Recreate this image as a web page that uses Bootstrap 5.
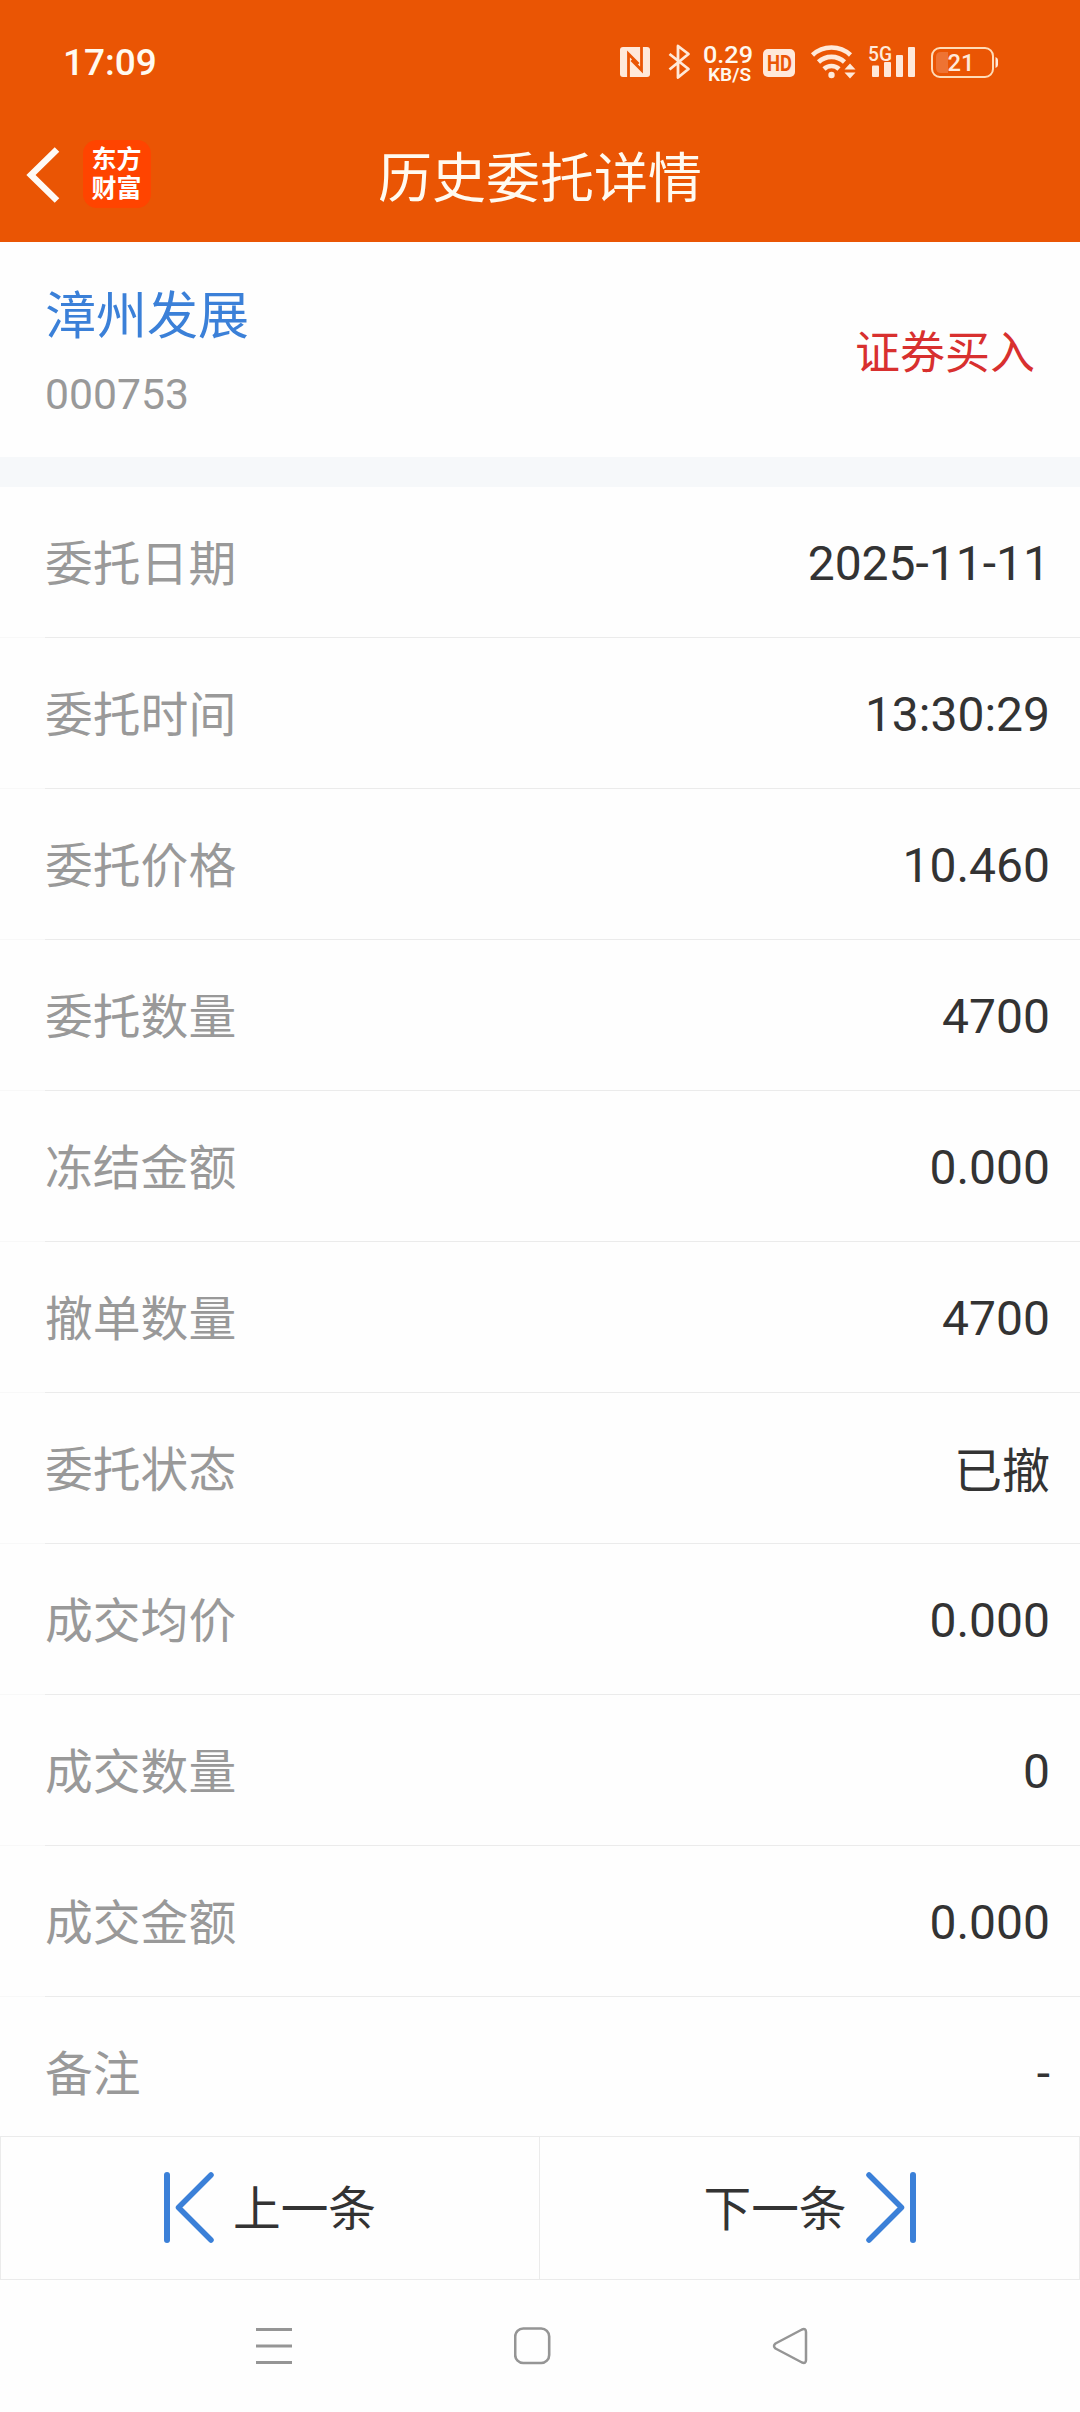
<!DOCTYPE html>
<html lang="zh-CN">
<head>
<meta charset="utf-8">
<meta name="viewport" content="width=device-width, initial-scale=1">
<title>历史委托详情</title>
<link href="https://cdn.jsdelivr.net/npm/bootstrap@5.3.0/dist/css/bootstrap.min.css" rel="stylesheet">
<style>
body{font-family:Roboto,"Noto Sans CJK SC",sans-serif;background:#fefefe;color:#333;font-size:48px;line-height:1}
.screen{height:2412px;overflow:hidden}
.top-area{background:#ea5504;color:#fffaf0;height:242px;flex:none}
.status{height:124px;padding:0 81px 0 63px}
.clock{font-size:37px;font-weight:500}
.status svg{display:block;flex:none;height:50px}
.titlebar{height:118px;padding:0 24px 18px}
.side{width:160px;gap:22px}
.page-title{font-size:54px;font-weight:400;padding-top:12px}
.logo{width:68px;height:68px;border-radius:14px;background:#ff4400;color:#fff;font-size:25px;font-weight:700;line-height:29px;padding:0 1px 1px 0}
.stock{height:215px;padding:4px 45px 0;flex:none}
.stock-name{font-size:51px;color:#3b80d8;line-height:60px;padding-top:2px}
.stock-code{font-size:42.7px;color:#999;line-height:50px;margin-top:22px}
.side-buy{font-size:45px;color:#d8302f;padding-top:3px}
.divider-band{height:30px;background:#f6f8fa;flex:none}
.details{height:1649px;overflow:hidden;flex:none}
.details li{height:151px;padding:2px 30px 0 45px;flex:none;background:linear-gradient(90deg,#f8f8f8 45px,#ebebeb 45px) bottom/100% 1px no-repeat}
.details li span{color:#999;font-size:47.8px;padding-top:4px}
.details li b{font-weight:400}
.pager{height:144px;flex:none}
.pager button{border:1px solid #ebebeb;background:#fefefe;color:#333;gap:19px;padding:0}
.pager button+button{border-left:0}
.pager svg{width:50px;height:71px;margin-bottom:1px}
.pager span{padding-top:6px;font-size:47.7px}
.sysnav{height:132px;padding:0 271px 0 256px}
.sysnav svg{width:38px;height:38px}
</style>
</head>
<body>
<main class="screen d-flex flex-column">
<header class="top-area">
  <div class="status d-flex align-items-center justify-content-between">
    <span class="clock">17:09</span>
    <svg viewBox="618 37 381 50" width="381" fill="#ffe9da" aria-hidden="true">
      <rect x="620" y="47" width="30" height="30" rx="3"/>
      <path d="M628.500 77V54L638.500 64M641.500 47v23L631.500 60" fill="none" stroke="#ea5504" stroke-width="2.800"/>
      <path d="M669.500 54l19 15-10.500 8.500V46l10.500 8-19 15.500" fill="none" stroke="#ffe9da" stroke-width="2.800" stroke-linejoin="round"/>
      <g font-family="Roboto, sans-serif" fill="#fff8ee">
        <text x="703" y="62.500" font-size="24.500" font-weight="500" textLength="50" lengthAdjust="spacingAndGlyphs">0.29</text>
        <text x="708" y="80.500" font-size="18.500" font-weight="600" textLength="43" lengthAdjust="spacingAndGlyphs">KB/S</text>
      </g>
      <rect x="763" y="49" width="32" height="28" rx="5"/>
      <text x="767" y="70.500" font-family="Roboto, sans-serif" font-weight="700" font-size="22" fill="#ea5504" textLength="25" lengthAdjust="spacingAndGlyphs">HD</text>
      <g fill="none" stroke="#ffe9da" stroke-width="4.600">
        <path d="M812.500 55a28 28 0 0 1 38 0"/>
        <path d="M818.500 62a19 19 0 0 1 26 0"/>
        <path d="M824 69a11 11 0 0 1 15 0"/>
      </g>
      <circle cx="831.500" cy="75" r="3.200"/>
      <path d="M844.500 69.500l5.500-6 5.500 6zM844.500 72.500h11l-5.500 6z"/>
      <text x="868" y="60.500" font-family="Roboto, sans-serif" font-weight="500" font-size="21" textLength="24" lengthAdjust="spacingAndGlyphs">5G</text>
      <rect x="872" y="65.500" width="7" height="11.500" rx="1"/>
      <rect x="884" y="62" width="7" height="15" rx="1"/>
      <rect x="896" y="55" width="7" height="22" rx="1"/>
      <rect x="908" y="47" width="7" height="30" rx="1"/>
      <rect x="932" y="48" width="61" height="29" rx="8" fill="none" stroke="#ffdcb8" stroke-width="2"/>
      <path d="M995.500 57q2.500 1 2.500 3v5q0 2-2.500 3z"/>
      <path d="M948 52v21h-7q-5 0-5-5V57q0-5 5-5z" fill="#ee7333"/>
      <text x="947.500" y="71" font-family="Roboto, sans-serif" font-size="24" font-weight="500" textLength="27" lengthAdjust="spacingAndGlyphs">21</text>
    </svg>
  </div>
  <div class="titlebar d-flex align-items-center justify-content-between">
    <div class="side d-flex align-items-center">
      <svg width="37" height="58" viewBox="0 0 37 58" fill="none" stroke="#fffaf5" stroke-width="6.500" aria-label="返回"><path d="M33 4.500L7 30l26 25.500"/></svg>
      <div class="logo d-flex flex-column align-items-center justify-content-center"><span>东方</span><span>财富</span></div>
    </div>
    <h1 class="page-title m-0">历史委托详情</h1>
    <div class="side"></div>
  </div>
</header>
<section class="stock d-flex align-items-center justify-content-between">
  <div><div class="stock-name">漳州发展</div><div class="stock-code">000753</div></div>
  <div class="side-buy">证券买入</div>
</section>
<div class="divider-band"></div>
<ul class="details list-unstyled m-0 d-flex flex-column">
  <li class="d-flex align-items-center justify-content-between"><span>委托日期</span><b>2025-11-11</b></li>
  <li class="d-flex align-items-center justify-content-between"><span>委托时间</span><b>13:30:29</b></li>
  <li class="d-flex align-items-center justify-content-between"><span>委托价格</span><b>10.460</b></li>
  <li class="d-flex align-items-center justify-content-between"><span>委托数量</span><b>4700</b></li>
  <li class="d-flex align-items-center justify-content-between"><span>冻结金额</span><b>0.000</b></li>
  <li class="d-flex align-items-center justify-content-between"><span>撤单数量</span><b>4700</b></li>
  <li class="d-flex align-items-center justify-content-between"><span>委托状态</span><b class="pt-1">已撤</b></li>
  <li class="d-flex align-items-center justify-content-between"><span>成交均价</span><b>0.000</b></li>
  <li class="d-flex align-items-center justify-content-between"><span>成交数量</span><b>0</b></li>
  <li class="d-flex align-items-center justify-content-between"><span>成交金额</span><b>0.000</b></li>
  <li class="d-flex align-items-center justify-content-between"><span>备注</span><b>-</b></li>
</ul>
<div class="pager d-flex">
  <button class="w-50 d-flex align-items-center justify-content-center" type="button">
    <svg viewBox="0 0 50 71" fill="none" stroke="#3b80d8" stroke-width="6" stroke-linecap="round" stroke-linejoin="round"><path d="M3 3v65"/><path d="M47 3L14.500 35.500L47 68" stroke-width="5.500"/></svg>
    <span>上一条</span>
  </button>
  <button class="w-50 d-flex align-items-center justify-content-center" type="button">
    <span>下一条</span>
    <svg viewBox="0 0 50 71" fill="none" stroke="#3b80d8" stroke-width="6" stroke-linecap="round" stroke-linejoin="round"><path d="M47 3v65"/><path d="M3 3l32.500 32.500L3 68" stroke-width="5.500"/></svg>
  </button>
</div>
<nav class="sysnav d-flex align-items-center justify-content-between" aria-label="系统导航">
  <svg viewBox="0 0 38 38" stroke="#959595" stroke-width="3"><path d="M0 2.500h36M0 19h36M0 35.500h36"/></svg>
  <svg viewBox="0 0 38 38" fill="none" stroke="#959595" stroke-width="2.600"><rect x="1.200" y="1.500" width="34" height="34.500" rx="8"/></svg>
  <svg viewBox="0 0 38 38" fill="none" stroke="#959595" stroke-width="2.500" stroke-linejoin="round"><path d="M4.500 16.500L31 2.500q4-1.500 4 2.500v28q0 4-4 2.500L4.500 21.500q-3-2.500 0-5z"/></svg>
</nav>
</main>
<script src="https://cdn.jsdelivr.net/npm/bootstrap@5.3.0/dist/js/bootstrap.bundle.min.js"></script>
</body>
</html>
